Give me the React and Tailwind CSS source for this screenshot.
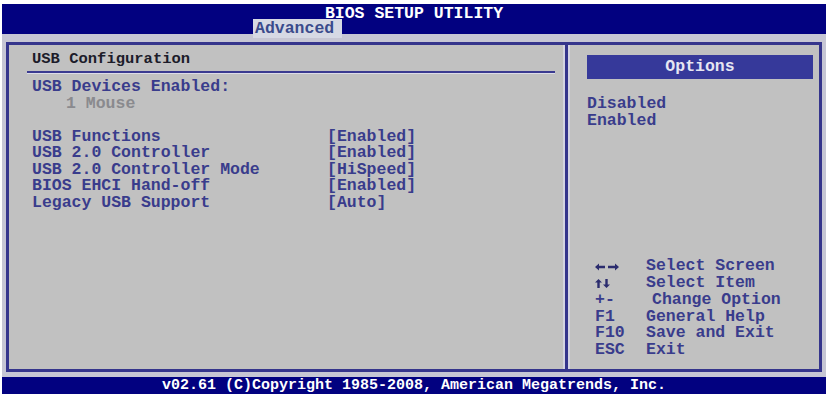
import React from 'react';

const items = [
    { label: 'USB Functions', value: '[Enabled]' },
    { label: 'USB 2.0 Controller', value: '[Enabled]' },
    { label: 'USB 2.0 Controller Mode', value: '[HiSpeed]' },
    { label: 'BIOS EHCI Hand-off', value: '[Enabled]' },
    { label: 'Legacy USB Support', value: '[Auto]' },
];

function LeftRight() {
    return (
        <svg width="24" height="8" viewBox="0 0 24 8" className="block">
            <path d="M0 4 L4 0.5 L4 2.8 L10 2.8 L10 5.2 L4 5.2 L4 7.5 Z" fill="#2b2c6e" />
            <path d="M24 4 L20 0.5 L20 2.8 L13 2.8 L13 5.2 L20 5.2 L20 7.5 Z" fill="#2b2c6e" />
        </svg>
    );
}

function UpDown() {
    return (
        <svg width="15" height="9" viewBox="0 0 15 9" className="block">
            <path d="M3.5 0 L7 3.5 L4.7 3.5 L4.7 9 L2.3 9 L2.3 3.5 L0 3.5 Z" fill="#2b2c6e" />
            <path d="M11.5 9 L15 5.5 L12.7 5.5 L12.7 0 L10.3 0 L10.3 5.5 L8 5.5 Z" fill="#2b2c6e" />
        </svg>
    );
}

const help = [
    { key: <LeftRight />, text: 'Select Screen' },
    { key: <UpDown />, text: 'Select Item' },
    { key: '+-', text: 'Change Option', indent: true },
    { key: 'F1', text: 'General Help' },
    { key: 'F10', text: 'Save and Exit' },
    { key: 'ESC', text: 'Exit' },
];

export default function App() {
    return (
        <div className="w-[826px] h-[396px] bg-white pt-[4px] pl-[2px] font-['Liberation_Mono',monospace] font-bold overflow-hidden">
            {/* TOP BAR */}
            <div className="h-[30px] bg-[#020180] relative z-10">
                <div className="h-[15px] pt-[2px] leading-[15px] text-[16.5px] text-white text-center whitespace-pre">BIOS SETUP UTILITY</div>
                <div className="ml-[251px] w-[89px] h-[19px] pl-[2px] bg-[#d6d9e4] text-[#3a4b8c] text-[16.5px] leading-[19px]">Advanced</div>
            </div>

            {/* BODY */}
            <div className="h-[343px] bg-[#c6c6d4] pt-[8px] pl-[4px] pr-[4px] pb-[5px]">
                <div className="h-full border-[3px] border-[#35358c] flex bg-[#c1c1c1]">
                    {/* LEFT PANEL */}
                    <div className="w-[554px] pt-[6px] pl-[18px] pr-[8px] text-[16.5px] leading-[16.5px] text-[#393c8c] whitespace-pre">
                        <div className="pl-[5px] text-[15.5px] text-[#1c1c2a]">USB Configuration</div>
                        <div className="mt-[3.5px] h-[3px] bg-[#3a3a90] border-b border-[#dcdce8]"></div>
                        <div className="mt-[5px] pl-[5px]">USB Devices Enabled:</div>
                        <div className="pl-[39px] text-[#8a8a8e]">1 Mouse</div>
                        <div className="h-[16.5px]"></div>
                        {items.map((it) => (
                            <div key={it.label} className="pl-[5px] grid grid-cols-[295px_1fr]">
                                <span>{it.label}</span>
                                <span>{it.value}</span>
                            </div>
                        ))}
                    </div>

                    {/* DIVIDER */}
                    <div className="w-[7px] flex">
                        <div className="w-[2px] bg-[#d4d4e2]"></div>
                        <div className="w-[3px] bg-[#35358c]"></div>
                        <div className="w-[2px] bg-[#d4d4e2]"></div>
                    </div>

                    {/* RIGHT PANEL */}
                    <div className="w-[249px] pt-[10px] pl-[17px] pr-[6px] pb-[10px] flex flex-col text-[16.5px] text-[#393c8c] whitespace-pre">
                        <div className="h-[24px] bg-[#36399a] text-[#e6e6f2] text-center leading-[24px]">Options</div>
                        <div className="mt-[17px] leading-[16.5px]">
                            <div>Disabled</div>
                            <div>Enabled</div>
                        </div>
                        <div className="mt-auto ml-[8px] leading-[16.8px]">
                            {help.map((h, i) => (
                                <div key={i} className="flex items-center h-[16.8px]">
                                    <span className="w-[51px] flex items-center">{h.key}</span>
                                    <span className={h.indent ? 'ml-[6px]' : ''}>{h.text}</span>
                                </div>
                            ))}
                        </div>
                    </div>
                </div>
            </div>

            {/* BOTTOM BAR */}
            <div className="h-[17px] bg-[#020180] text-white text-[15px] leading-[17px] text-center whitespace-pre">
                v02.61 (C)Copyright 1985-2008, American Megatrends, Inc.
            </div>
        </div>
    );
}
